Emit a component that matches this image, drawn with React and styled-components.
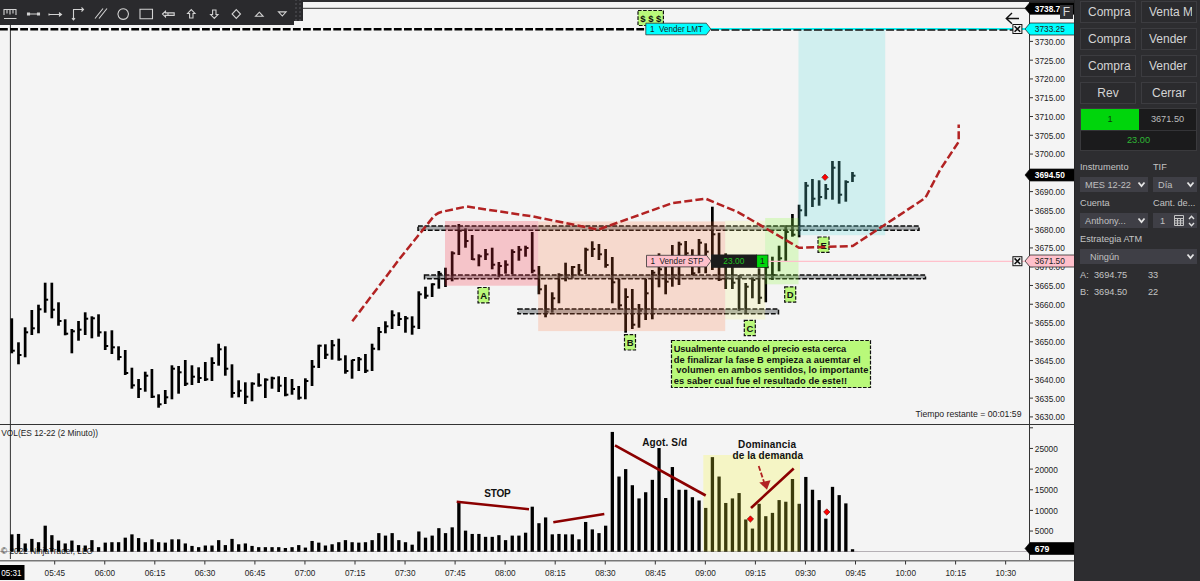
import React from "react";
import styled, { createGlobalStyle } from "styled-components";

const GlobalStyle = createGlobalStyle`
  * {
    box-sizing: border-box;
  }

  body {
    margin: 0;
    background: #2d2d30;
    font-family: "Liberation Sans", Arial, sans-serif;
    overflow: hidden;
  }
`;

// high, low and close of every 2 minute bar, in chart pixels
const bars = [
  [318.3, 353.3, 350.7], [342.3, 364.3, 355], [327.3, 357.3, 332.3],
  [310, 335, 328.3], [304.7, 333.3, 309.3], [282.7, 312.7, 299.7],
  [282.7, 318.3, 309.7], [302.3, 325.7, 321], [319.3, 335.3, 333.7],
  [329, 353.3, 331.3], [321, 340.7, 329.7], [312.3, 335, 318.7],
  [316.3, 338.3, 318.3], [314.3, 336.7, 332.3], [331.3, 350, 346],
  [330.3, 354, 347.3], [346.3, 360.3, 357], [350, 375, 373],
  [367.7, 388.7, 385.3], [379, 398, 389], [371.7, 391.7, 375.7],
  [369, 398, 396.7], [394.3, 407.7, 404.3], [390, 404, 397.3],
  [365.3, 399.3, 368.7], [366, 393.7, 372.3], [360, 386, 383.7],
  [365.3, 385, 376.7], [367.3, 383, 378], [362, 381, 379.3],
  [357.3, 381, 363], [343.7, 365.7, 349.3], [346.3, 375.7, 368.7],
  [364.3, 397.7, 393], [380.3, 397.3, 390.7], [382.3, 404, 396.7],
  [382.3, 401.3, 383.7], [373.3, 386.7, 385.3], [378.3, 398, 379.7],
  [376.7, 388.7, 378.3], [376.3, 392, 385.7], [377, 396.3, 394.7],
  [379, 394.7, 389], [386, 399.7, 397.7], [378.3, 399.3, 381],
  [360, 386, 366.7], [344.7, 368, 345.7], [344.3, 359, 354.7],
  [340, 359.7, 345.3], [338.7, 360.7, 359.3], [355.3, 373.7, 371],
  [359.7, 378.7, 360], [357, 371, 359.3], [354, 373, 370.7],
  [343.7, 371, 348.7], [327, 350.3, 332], [321.3, 333.3, 326.3],
  [310.3, 329, 315.3], [312.3, 326, 319], [316, 332.7, 318.3],
  [316.3, 334.7, 326.7], [291.3, 329, 294.3], [286.7, 298.7, 295.7],
  [283.3, 297, 284.3], [271, 288.7, 273.7], [267.7, 287, 279],
  [251.3, 281.3, 253.3], [224, 255, 230.7], [228.3, 247.7, 241],
  [235, 260, 259.3], [254.3, 266.3, 256.3], [249, 260, 254.3],
  [247.7, 269.3, 264.7], [262, 277.3, 266], [260.3, 273.7, 264.7],
  [249.3, 274.3, 252], [246, 260.7, 249.7], [245.7, 256.7, 248],
  [232, 273.3, 270.7], [266, 294.3, 289.3], [284.7, 317.3, 311.7],
  [292.3, 312.7, 298.3], [273.3, 303.3, 275.3], [262.7, 281.3, 277.3],
  [266, 278.3, 267], [264, 275.3, 270.3], [247.7, 274, 249.7],
  [241.3, 257, 249], [244, 260, 254.3], [249, 267.7, 265],
  [257, 303.3, 282.3], [279, 309.7, 305.3], [288.3, 332.7, 297],
  [289, 329, 324.7], [304, 327.7, 310.7], [279, 320, 293.3],
  [270, 319.3, 272.7], [253.3, 287.3, 269.3], [266.7, 294.3, 281.7],
  [245, 286.7, 277.3], [241.7, 285, 244.3], [241, 266.7, 253.3],
  [249.3, 275.3, 273.3], [239, 273.3, 242.7], [243.3, 273.3, 251.7],
  [206.7, 270, 234.3], [232.7, 281, 279.3], [253.3, 289, 278.3],
  [266.7, 289, 282.7], [275, 311, 277.3], [283, 313, 286.7],
  [277.3, 298.3, 280], [268.3, 304, 297.7], [256.7, 302.3, 267.3],
  [256.7, 280, 275], [245.7, 271.3, 258.3], [225.3, 261, 232],
  [214, 236.7, 234.7], [204.7, 237.3, 210.3], [182, 216.3, 185.7],
  [179, 207, 198.7], [180.3, 205.7, 197], [184, 199.3, 189],
  [161, 199.7, 167.7], [161, 203.7, 194.7], [180.3, 201.7, 182],
  [172, 182, 175.7],
];

// in hundreds of contracts
const volumes = [
  42, 43, 20, 31, 23, 63, 40, 27, 20, 27, 16, 15, 28, 11, 22, 23, 23, 34, 42,
  33, 23, 30, 23, 22, 30, 30, 20, 14, 11, 15, 15, 28, 16, 31, 18, 20, 14, 11,
  11, 11, 11, 9, 11, 16, 10, 26, 22, 15, 18, 23, 28, 23, 22, 23, 28, 45, 39,
  45, 28, 23, 17, 49, 34, 39, 57, 45, 59, 119, 51, 43, 43, 36, 36, 40, 28, 39,
  39, 46, 109, 69, 83, 42, 43, 42, 42, 30, 72, 54, 45, 63, 290, 182, 200, 161,
  129, 144, 174, 251, 130, 205, 150, 150, 132, 124, 106, 229, 182, 118, 129,
  142, 78, 56, 116, 86, 94, 125, 121, 176, 116, 181, 150, 125, 80, 157, 137,
  117, 6,
];

const prices = Array.from({ length: 21 }, (_, i) => 3730 - i * 5);

// the last price tag covers this label
const labelledPrices = prices.filter((price) => price !== 3695);

const times = Array.from({ length: 20 }, (_, i) => {
  const minutes = 345 + i * 15;
  const pad = (n) => String(n).padStart(2, "0");
  return `${pad(Math.floor(minutes / 60))}:${pad(minutes % 60)}`;
});

const letters = [
  ["A", 478, 287.5],
  ["B", 624.5, 334.7],
  ["C", 744.3, 320.3],
  ["D", 784.7, 286.8],
  ["E", 818, 237],
];

const barX = (i) => 11.8 + i * 6.672;
const priceY = (price) => 41.4 + (3730 - price) * 3.755;
const volumeY = (volume) => 551.7 - volume * 0.413;

const Screen = styled.div`
  display: flex;
  width: 1200px;
  height: 581px;
  background: #2d2d30;
`;

const ChartArea = styled.main`
  position: relative;
  width: 1074px;
  height: 581px;
  background: #f4f4f4;
`;

const Canvas = styled.svg`
  display: block;

  text {
    font-family: "Liberation Sans", Arial, sans-serif;
    font-size: 9.3px;
    fill: #1c1c1c;
  }
`;

const BoldText = styled.text`
  && {
    font-size: ${({ size }) => size || 10}px;
    font-weight: 700;
    fill: #111;
  }
`;

const TagText = styled.text`
  && {
    fill: ${({ color }) => color || "#222"};
  }
`;

const Toolbar = styled.div`
  position: absolute;
  top: 0;
  left: 0;
  display: flex;
  align-items: flex-start;
`;

const Tools = styled.div`
  display: flex;
  align-items: center;
  width: 294px;
  height: 25px;
  padding: 3px 0 0 0;
  background: #2a2a2d;
`;

const Tool = styled.svg`
  width: 22.65px;
  height: 20px;
  flex: none;
  fill: none;
  stroke: #d2d2d2;
  stroke-width: 1.1;
`;

const Grip = styled.div`
  width: 9px;
  height: 21px;
  background: #2a2a2d radial-gradient(circle, #404044 0.7px, transparent 1px) 0
    2px / 4px 4px;
`;

const FButton = styled.div`
  position: absolute;
  top: 5px;
  right: 1px;
  width: 13px;
  height: 14px;
  background: #303033;
  color: #d8d8d8;
  font-size: 12px;
  line-height: 14px;
  text-align: center;
`;

const Panel = styled.aside`
  width: 126px;
  height: 581px;
  padding: 1px 3px 0 5px;
  border-left: 1px solid #252527;
  background: #2d2d30;
  color: #c4c4c4;
  font-size: 9.2px;
`;

const Buttons = styled.div`
  display: grid;
  grid-template-columns: 56px 56px;
  gap: 4.7px 5px;
`;

const Button = styled.button`
  height: 22.2px;
  padding: 0 4px 1px 7px;
  padding-left: ${({ $centered }) => ($centered ? 4 : 7)}px;
  border: 1px solid #3c3c40;
  background: #2b2b2e;
  color: #d4d4d4;
  font-family: inherit;
  font-size: 12px;
  line-height: 20px;
  text-align: ${({ $centered }) => ($centered ? "center" : "left")};
`;

const ButtonLabel = styled.span`
  display: block;
  overflow: hidden;
  white-space: nowrap;
`;

const Position = styled.div`
  display: grid;
  grid-template-columns: 58px 1fr;
  grid-template-rows: 21px 20px;
  width: 117px;
  margin-top: 4px;
  border: 1px solid #3a3a3d;
  background: #1b1b1c;
`;

const Cell = styled.div`
  display: flex;
  align-items: center;
  justify-content: center;
  grid-column: ${({ $wide }) => ($wide ? "1 / 3" : "auto")};
  border-top: ${({ $wide }) => ($wide ? "1px solid #343437" : "0")};
  background: ${({ $long }) => ($long ? "#00d50c" : "transparent")};
  color: ${({ $long, $wide }) =>
    $long ? "#0b3a0c" : $wide ? "#2fb835" : "#bdbdbd"};
`;

const Form = styled.div`
  display: grid;
  grid-template-columns: 67.5px 44px;
  column-gap: 5.5px;
  margin-top: 8px;
`;

const Field = styled.label`
  grid-column: ${({ $wide }) => ($wide ? "1 / 3" : "auto")};
  height: 36.2px;
`;

const FieldName = styled.div`
  height: 18.3px;
  line-height: 16px;
  white-space: nowrap;
`;

const Select = styled.div`
  display: flex;
  align-items: center;
  justify-content: space-between;
  height: 15px;
  padding: 0 2px 0 ${({ $indent }) => $indent || 5}px;
  background: #3f3f46;
  color: #c0c0c0;

  svg {
    flex: none;
  }
`;

const Quotes = styled.div`
  display: grid;
  grid-template-columns: 14px 54px 1fr;
  line-height: 16.5px;
`;

const Chevron = () => (
  <svg width="9" height="7" viewBox="0 0 9 7">
    <path d="M1.5 1.5 4.5 5 7.5 1.5" fill="none" stroke="#e4e4e4" strokeWidth="1.8" />
  </svg>
);

const Calculator = () => (
  <svg width="10" height="11" viewBox="0 0 10 11">
    <path d="M.5.5h9v10h-9zM.5 3.5h9M.5 5.8h9M.5 8.1h9M3.5 3.5v7M6.5 3.5v7" fill="none" stroke="#c4c4c4" />
  </svg>
);

const Spinner = () => (
  <svg width="7" height="12" viewBox="0 0 7 12">
    <path d="M1 4 3.5 1.3 6 4M1 8 3.5 10.7 6 8" fill="none" stroke="#e0e0e0" strokeWidth="1.4" />
  </svg>
);

const toolPaths = [
  "M4 5.5h12.5M4 5v6M7 5.5v4M10 5.5v5M13 5.5v4M16 5v6M4 14.5h12.5",
  "M5 10h11M4.5 9h2v2h-2zM14.5 9h2v2h-2z",
  "M4 10.5h12M4 9.5v2M14.5 9 16.5 10.5 14.5 12z",
  "M5.5 16V5.5h10M13.5 3.5 15.5 5.5 13.5 7.5M4 14.2 5.5 16 7 14.2",
  "M4 14.5 12 4.5M8 14.5 16 4.5",
  "M10.2 4.8a5.3 5.3 0 1 0 .01 0",
  "M4 5.2h12.5v9.6H4z",
  "M4.5 10 7.5 7.3v1.6h8.7v2.5H7.5v1.6zM10 9v2.5",
  "M10.3 5.5 14 9.5h-2v4.5H8.6V9.5h-2z",
  "M10.3 14.5 6.6 10.5h2V6H12v4.5h2z",
  "M10.3 5.6 14.5 10 10.3 14.4 6.1 10z",
  "M10.3 8.2 14.1 12.3H6.5z",
  "M10.3 12 6.5 7.9h7.6z",
];

// keeps a label at a given width whatever the font renders
const Label = ({ x, y, width, children }) => (
  <text x={x} y={y} textLength={width} lengthAdjust="spacingAndGlyphs">
    {children}
  </text>
);

const AxisTag = ({ y, fill, color, children }) => (
  <g>
    <path
      d={`M1025 ${y}l5-6h45v12h-45z`}
      fill={fill}
      stroke="#111"
      strokeWidth="0.7"
    />
    <TagText
      x="1034.8"
      y={y + 3.3}
      color={color}
      textLength={children.length > 3 ? 30 : 14.5}
      lengthAdjust="spacingAndGlyphs"
      fontWeight={color ? 700 : 400}
    >
      {children}
    </TagText>
  </g>
);

const Zone = ({ x, y, width, height }) => (
  <g>
    <rect x={x} y={y} width={width} height={height} fill="#5a6064" fillOpacity="0.5" />
    <rect
      x={x}
      y={y}
      width={width}
      height={height}
      fill="none"
      stroke="#0c0c0c"
      strokeWidth="1.5"
      strokeDasharray="4.8 1.9"
    />
  </g>
);

const NoteBox = (props) => (
  <rect
    {...props}
    fill="#b9f97a"
    stroke="#111"
    strokeWidth="1.2"
    strokeDasharray="3.6 1.5"
  />
);

const Diamond = ({ x, y }) => (
  <path
    d={`M${x} ${y - 3.2}l3.2 3.2-3.2 3.2-3.2-3.2z`}
    fill="#ff0000"
    stroke="#5a1010"
    strokeWidth="0.6"
  />
);

const CloseBox = ({ x, y }) => (
  <g fill="#f4f4f4" stroke="#111">
    <rect x={x - 4.5} y={y - 4.5} width="9" height="9" strokeWidth="1" />
    <path d={`M${x - 2.8} ${y - 2.8}l5.6 5.6m0-5.6l-5.6 5.6`} strokeWidth="1.6" />
  </g>
);

const PriceBars = () => (
  <g stroke="#000">
    {bars.map(([high, low, close], i) => (
      <g key={i}>
        <path d={`M${barX(i)} ${high}V${low}`} strokeWidth="2.7" />
        <path d={`M${barX(i)} ${close}h3`} strokeWidth="2" />
      </g>
    ))}
  </g>
);

const VolumeBars = () => (
  <g fill="#000">
    {volumes.map((volume, i) => (
      <rect
        key={i}
        x={barX(i) - 1.6}
        y={volumeY(volume)}
        width="3.3"
        height={551.7 - volumeY(volume)}
      />
    ))}
  </g>
);

const Axes = () => (
  <g>
    <g stroke="#333" strokeWidth="1">
      <path d="M1029.5 0V560.5M0 424.5H1074" />
      <path d="M0 560.8H1074" stroke="#777" strokeWidth="1.4" />
      {prices.map((price) => (
        <path key={price} d={`M1029.5 ${priceY(price)}h3.5`} />
      ))}
      {[0, 50, 100, 150, 200, 250, 300].map((volume) => (
        <path key={volume} d={`M1029.5 ${volumeY(volume)}h3.5`} />
      ))}
      {times.map((time, i) => (
        <path key={time} d={`M${54.7 + i * 50.05} 561v3.5`} />
      ))}
    </g>
    {labelledPrices.map((price) => (
      <Label key={price} x="1034.8" y={priceY(price) + 3.4} width="30">
        {price}.00
      </Label>
    ))}
    {[50, 100, 150, 200, 250].map((volume) => (
      <Label
        key={volume}
        x="1034.8"
        y={volumeY(volume) + 3.4}
        width={volume < 100 ? 18.5 : 23}
      >
        {volume * 100}
      </Label>
    ))}
    {times.map((time, i) => (
      <Label key={time} x={44.6 + i * 50.05} y="576" width="20.5">
        {time}
      </Label>
    ))}
  </g>
);

const Chart = () => (
  <Canvas width="1074" height="581" viewBox="0 0 1074 581">
    <rect width="1074" height="2" fill="#2d2d30" />
    <path d="M300 8.3H1029M10.4 25V559" stroke="#333" fill="none" />
    <Axes />
    <path d="M0 551.5H1029" stroke="#b5b0b5" />
    <Label x="1" y="554.2" width="91.5">© 2022 NinjaTrader, LLC</Label>
    <Label x="1.3" y="436" width="96.8">VOL(ES 12-22 (2 Minuto))</Label>
    <Label x="915.5" y="416.5" width="106">Tiempo restante = 00:01:59</Label>

    <PriceBars />
    <VolumeBars />

    <Zone x={418} y={225.9} width={501} height={4.3} />
    <Zone x={424.5} y={275} width={501} height={3.7} />
    <Zone x={518} y={309} width={260.5} height={4.7} />

    <rect x="445" y="221" width="93.2" height="64.7" fill="rgba(252,48,68,.24)" />
    <rect x="538.2" y="221.4" width="187" height="109.7" fill="rgba(255,110,50,.2)" />
    <rect x="725.2" y="220.7" width="40" height="98.8" fill="rgba(244,244,120,.2)" />
    <rect x="765.2" y="218" width="33.3" height="66.3" fill="rgba(145,250,70,.26)" />
    <rect x="798.5" y="30" width="86.7" height="205.2" fill="rgba(100,225,222,.25)" />
    <rect x="703.3" y="455" width="96.7" height="96.5" fill="rgba(252,252,50,.24)" />

    <path d="M0 29.3H646" stroke="#000" strokeWidth="2.4" strokeDasharray="7.8 2.3" />
    <path d="M711 29H1025" stroke="#10f0f0" strokeWidth="1.8" />
    <path d="M711 30H1013" stroke="#111" strokeWidth="1.3" strokeDasharray="8 2.3" />

    {letters.map(([letter, x, y]) => (
      <g key={letter}>
        <NoteBox x={x} y={y} width="11" height="15.3" />
        <BoldText x={x + 5.6} y={y + 11.6} size={9.5} textAnchor="middle">
          {letter}
        </BoldText>
      </g>
    ))}
    <NoteBox x="638" y="10.5" width="25.4" height="15" />
    <BoldText x="640.3" y="21.8" textLength="21" size={9.5}>$ $ $</BoldText>

    <NoteBox x="671.5" y="340.5" width="199" height="47" />
    <BoldText x="673.7" y="352" size={9.3} textLength="172.5">
      Usualmente cuando el precio esta cerca
    </BoldText>
    <BoldText x="673.7" y="362.7" size={9.3} textLength="187">
      de finalizar la fase B empieza a auemtar el
    </BoldText>
    <BoldText x="676.3" y="373.4" size={9.3} textLength="192">
      volumen en ambos sentidos, lo importante
    </BoldText>
    <BoldText x="673.7" y="384" size={9.3} textLength="173.5">
      es saber cual fue el resultado de este!!
    </BoldText>

    <path
      d="M352.3 321.3 400 258.3 434 216Q438 212.6 442 211.8L466.7 206.5 533 216.5 598.3 229.6 671.7 203.3 705.7 198.7 738.3 212.3 776.7 234.7 799 247.8 852.7 246 925.3 198 940 170 958.7 141.7V124.5"
      fill="none"
      stroke="#b22222"
      strokeWidth="2.5"
      strokeDasharray="8 3.2"
    />

    <g stroke="#8b0000" strokeWidth="2.6">
      <path d="M456.7 501.8 529 509.2M553.3 522.2 604.3 514M615 445.3 705.7 495.5M751 508 793.7 468.5" />
    </g>
    <path d="M758.7 466 764 482" stroke="#b22222" strokeWidth="1.8" strokeDasharray="5 2" />
    <path d="M759.3 482.6 770.5 480.3 767 489.7z" fill="#b22222" />
    <Diamond x={750.4} y={519} />
    <Diamond x={826.8} y={512} />
    <Diamond x={825} y={177.3} />

    <BoldText x="484.2" y="496.5" textLength="26.5">STOP</BoldText>
    <BoldText x="642.2" y="446" textLength="45">Agot. S/d</BoldText>
    <BoldText x="738" y="447.5" textLength="58">Dominancia</BoldText>
    <BoldText x="732.5" y="458.5" textLength="70.5">de la demanda</BoldText>

    <path d="M645.8 23.2h60.5l4.5 5.8-4.5 5.8h-60.5z" fill="#00ffff" stroke="#333" strokeWidth="0.8" />
    <Label x="650" y="32.2" width="53">1&#160; Vender LMT</Label>

    <path d="M768 261.3H1025" stroke="#ffc0cb" strokeWidth="1.2" />
    <path d="M646.5 255.3h60l4.5 5.8-4.5 5.8h-60z" fill="#ffc0cb" stroke="#333" strokeWidth="0.8" />
    <Label x="650.5" y="264.3" width="53">1&#160; Vender STP</Label>
    <rect x="711" y="254.5" width="46" height="13.3" fill="#1b1b1c" />
    <TagText x="723.3" y="264.4" color="#20c020" textLength="21" lengthAdjust="spacingAndGlyphs">
      23.00
    </TagText>
    <rect x="756.7" y="255" width="11.3" height="12.5" fill="#00d50c" stroke="#111" strokeWidth="0.7" />
    <text x="762.3" y="264.4" textAnchor="middle">1</text>

    <AxisTag y={8.3} fill="#000" color="#fff">3738.75</AxisTag>
    <AxisTag y={29} fill="#00ffff">3733.25</AxisTag>
    <AxisTag y={175} fill="#000" color="#fff">3694.50</AxisTag>
    <AxisTag y={261} fill="#ffc0cb">3671.50</AxisTag>
    <AxisTag y={548.5} fill="#000" color="#fff">679</AxisTag>
    <CloseBox x={1017.4} y={29} />
    <CloseBox x={1017.4} y={261.2} />
    <path d="M1019 18.5H1006.5M1012 13 1006.3 18.5 1012 23.7" fill="none" stroke="#111" strokeWidth="1.4" />

    <rect y="565" width="24.5" height="15" fill="#000" />
    <TagText x="1.3" y="576" color="#fff" textLength="20.3" lengthAdjust="spacingAndGlyphs">
      05:31
    </TagText>
  </Canvas>
);

const orderButtons = [
  ["Compra", false],
  ["Venta M", false],
  ["Compra", false],
  ["Vender", false],
  ["Compra", false],
  ["Vender", false],
  ["Rev", true],
  ["Cerrar", true],
];

export default () => {
  return (
    <Screen>
      <GlobalStyle />
      <ChartArea>
        <Chart />
        <Toolbar>
          <Tools>
            {toolPaths.map((path) => (
              <Tool key={path} viewBox="0 0 22.65 20">
                <path d={path} />
              </Tool>
            ))}
          </Tools>
          <Grip />
        </Toolbar>
        <FButton>F</FButton>
      </ChartArea>
      <Panel>
        <Buttons>
          {orderButtons.map(([label, centered], i) => (
            <Button key={i} $centered={centered}>
              <ButtonLabel>{label}</ButtonLabel>
            </Button>
          ))}
        </Buttons>
        <Position>
          <Cell $long>1</Cell>
          <Cell>3671.50</Cell>
          <Cell $wide>23.00</Cell>
        </Position>
        <Form>
          <Field>
            <FieldName>Instrumento</FieldName>
            <Select>
              MES 12-22 <Chevron />
            </Select>
          </Field>
          <Field>
            <FieldName>TIF</FieldName>
            <Select>
              Día <Chevron />
            </Select>
          </Field>
          <Field>
            <FieldName>Cuenta</FieldName>
            <Select>
              Anthony... <Chevron />
            </Select>
          </Field>
          <Field>
            <FieldName>Cant. de...</FieldName>
            <Select $indent={7}>
              1 <span /> <Calculator /> <Spinner />
            </Select>
          </Field>
          <Field $wide>
            <FieldName>Estrategia ATM</FieldName>
            <Select $indent={10}>
              Ningún <Chevron />
            </Select>
          </Field>
        </Form>
        <Quotes>
          <span>A:</span>
          <span>3694.75</span>
          <span>33</span>
          <span>B:</span>
          <span>3694.50</span>
          <span>22</span>
        </Quotes>
      </Panel>
    </Screen>
  );
};
